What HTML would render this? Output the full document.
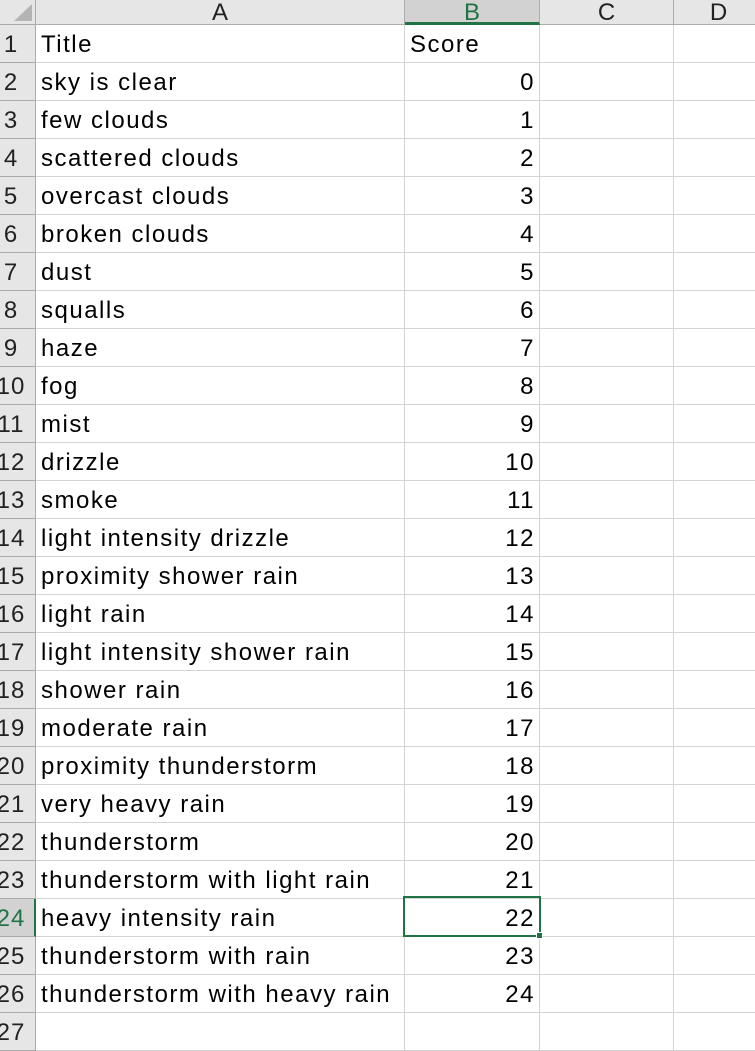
<!DOCTYPE html>
<html><head><style>
*{margin:0;padding:0;box-sizing:border-box}
body{width:755px;height:1045px;overflow:hidden;background:#fff;font-family:"Liberation Sans",sans-serif;position:relative}
.hdr{position:absolute;top:0;height:25px;background:#e6e6e6;border-bottom:1px solid #ababab;border-right:1px solid #ababab;font-size:24px;color:#222;text-align:center;line-height:25px;overflow:hidden}
.rh{position:absolute;left:0;width:36px;height:38px;background:#e6e6e6;border-right:1px solid #ababab;border-bottom:1px solid #ababab;font-size:24px;line-height:40px;overflow:hidden;white-space:nowrap;color:#222}
.rh span{position:absolute;left:-19px;width:60px;text-align:center;letter-spacing:1px}
.c{position:absolute;height:38px;border-right:1px solid #d4d4d4;border-bottom:1px solid #d4d4d4;font-size:24px;line-height:40px;white-space:nowrap;color:#000;overflow:visible;letter-spacing:1.5px}
.a{left:36px;width:369px;padding-left:5px}
.b{left:405px;width:135px;text-align:right;padding-right:4px}
.cc{left:540px;width:134px}
.d{left:674px;width:90px}
</style></head><body>
<div class="hdr" style="left:0;width:36px"><svg width="36" height="25" style="position:absolute;left:0;top:0"><polygon points="32,4 32,21 14,21" fill="#b4b4b4"/></svg></div>
<div class="hdr" style="left:36px;width:369px">A</div>
<div class="hdr" style="left:405px;width:135px;background:#d2d2d2;color:#217346;border-bottom:3px solid #217346">B</div>
<div class="hdr" style="left:540px;width:134px">C</div>
<div class="hdr" style="left:674px;width:90px">D</div>
<div id="g"></div>
<script>
var d=[["Title","Score"],["sky is clear",0],["few clouds",1],["scattered clouds",2],["overcast clouds",3],["broken clouds",4],["dust",5],["squalls",6],["haze",7],["fog",8],["mist",9],["drizzle",10],["smoke",11],["light intensity drizzle",12],["proximity shower rain",13],["light rain",14],["light intensity shower rain",15],["shower rain",16],["moderate rain",17],["proximity thunderstorm",18],["very heavy rain",19],["thunderstorm",20],["thunderstorm with light rain",21],["heavy intensity rain",22],["thunderstorm with rain",23],["thunderstorm with heavy rain",24],["",""]];
var h="";
for(var i=0;i<d.length;i++){var t=25+i*38;var sel=i==23;
h+='<div class="rh" style="top:'+t+'px;'+(sel?'background:#d2d2d2;color:#217346;border-right:2px solid #217346':'')+'"><span>'+(i+1)+'</span></div>';
h+='<div class="c a" style="top:'+t+'px">'+d[i][0]+'</div>';
h+='<div class="c b" style="top:'+t+'px;'+(i==0?'text-align:left;padding-left:5px':'')+'">'+d[i][1]+'</div>';
h+='<div class="c cc" style="top:'+t+'px"></div><div class="c d" style="top:'+t+'px"></div>';}
document.getElementById("g").innerHTML=h;
</script>
<div style="position:absolute;left:403px;top:896px;width:138px;height:41px;border:2px solid #217346"></div>
<div style="position:absolute;left:536px;top:932px;width:7px;height:7px;background:#217346;border:1px solid #fff"></div>
</body></html>
